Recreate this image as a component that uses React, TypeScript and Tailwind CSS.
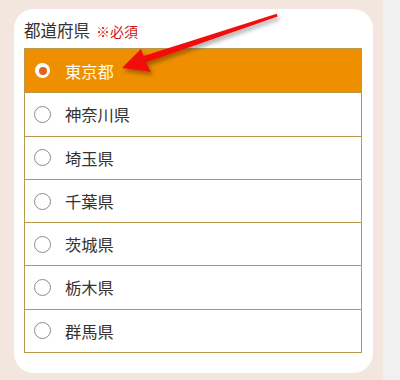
import React from "react";

const items = ["東京都", "神奈川県", "埼玉県", "千葉県", "茨城県", "栃木県", "群馬県"];

export default function App() {
  return (
    <div
      className="relative w-[400px] h-[380px] flex bg-[#f0f0f0] overflow-hidden"
      style={{ fontFamily: '"Noto Sans CJK JP", "Noto Sans", sans-serif' }}
    >
      <div className="w-[383px] h-full bg-[#f3e6de] pt-[9px] pl-[14px]">
        <div className="w-[359px] h-[364px] bg-white rounded-[20px] pt-[10px] pl-[10px] pr-[11px]">
          <div className="flex items-baseline h-[23px] leading-[23px] mb-[6px]">
            <span className="text-[16.5px] text-[#333]">都道府県</span>
            <span className="ml-[6px] text-[14px] text-[#d21414]">※必須</span>
          </div>
          <div className="border border-[#b8994a]">
            {items.map((name, i) => {
              const selected = i === 0;
              return (
                <div
                  key={name}
                  className={
                    "flex items-center h-[43.3px] pl-[9px] " +
                    (i > 0 ? "border-t border-[#b8994a] " : "") +
                    (selected ? "bg-[#ef8f00]" : "bg-white")
                  }
                >
                  <span className="w-[17px] h-[17px] flex items-center justify-center">
                    {selected ? (
                      <span className="w-[15px] h-[15px] rounded-full bg-white flex items-center justify-center">
                        <span className="w-[8px] h-[8px] rounded-full bg-[#e2611c]" />
                      </span>
                    ) : (
                      <span className="w-[17px] h-[17px] rounded-full bg-white border border-[#8c8c8c]" />
                    )}
                  </span>
                  <span
                    className={
                      "ml-[14px] text-[16.3px] leading-none " +
                      (selected ? "text-[#fffbea]" : "text-[#333]")
                    }
                  >
                    {name}
                  </span>
                </div>
              );
            })}
          </div>
        </div>
      </div>
      <svg
        className="absolute left-0 top-0 pointer-events-none"
        width="400"
        height="380"
        viewBox="0 0 400 380"
      >
        <defs>
          <filter id="sh" x="-20%" y="-50%" width="140%" height="200%">
            <feDropShadow dx="2" dy="3" stdDeviation="2" floodColor="#000" floodOpacity="0.35" />
          </filter>
        </defs>
        <polygon
          filter="url(#sh)"
          fill="#f20d0d"
          points="122,68 141,49 143.5,56 276.7,13.8 277.6,16.4 146,62.5 151,72"
        />
      </svg>
    </div>
  );
}
